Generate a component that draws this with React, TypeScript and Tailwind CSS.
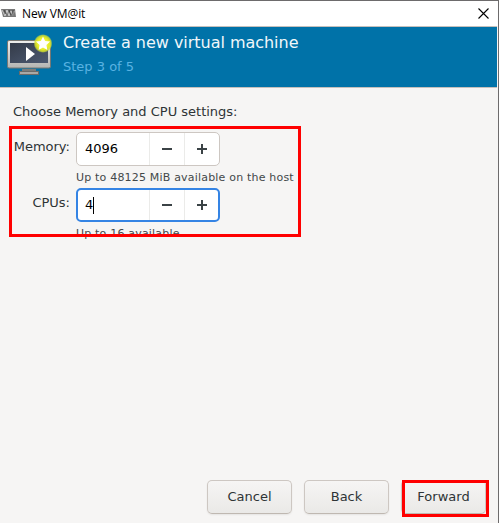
import React from "react";

function MachineIcon() {
  return (
    <svg width="47" height="46" viewBox="0 0 47 46" className="shrink-0">
      <defs>
        <linearGradient id="frame" x1="0" y1="0" x2="0" y2="1">
          <stop offset="0" stopColor="#efefed" />
          <stop offset="1" stopColor="#b4b4b2" />
        </linearGradient>
        <linearGradient id="screen" x1="0" y1="0" x2="1" y2="1">
          <stop offset="0" stopColor="#343b48" />
          <stop offset="0.5" stopColor="#414b5e" />
          <stop offset="1" stopColor="#4c5870" />
        </linearGradient>
        <radialGradient id="glow">
          <stop offset="0" stopColor="#ffff80" />
          <stop offset="0.65" stopColor="#e4eb24" />
          <stop offset="0.85" stopColor="#d8e32c" stopOpacity="0.8" />
          <stop offset="1" stopColor="#b4d050" stopOpacity="0" />
        </radialGradient>
      </defs>
      <path d="M16 35h14v3H16z" fill="#7c7c7a" />
      <rect x="13.500" y="37.500" width="19" height="3" fill="#a9a9a6" stroke="#6b6b69" />
      <rect x="1.500" y="6.500" width="43" height="27.500" rx="1.500" fill="url(#frame)" stroke="#777773" />
      <rect x="4" y="9" width="38" height="20" fill="url(#screen)" />
      <path d="M20 13v14l9-7z" fill="#fff" />
      <circle cx="37" cy="9.500" r="9.500" fill="url(#glow)" />
      <path d="M37 2.500l2.100 4.500 5 .6-3.700 3.400 1 4.900-4.400-2.500-4.400 2.500 1-4.900-3.700-3.400 5-.6z" fill="#fff" />
    </svg>
  );
}

function SpinButton({ value, focused = false }: { value: string; focused?: boolean }) {
  return (
    <div
      className={`flex h-[34px] w-36 items-stretch rounded-[5px] bg-white ${
        focused ? "border-2 border-[#3584e4]" : "border border-[#cdc7c2]"
      }`}
    >
      <div className={`flex flex-1 items-center text-black ${focused ? "pl-[7px]" : "pl-2"}`}>
        {value}
        {focused && <span className="h-[17px] w-px bg-black" />}
      </div>
      <div className="flex w-[35px] items-center justify-center border-l border-[#ebebe9]">
        <span className="h-0.5 w-2.5 bg-[#3b4346]" />
      </div>
      <div
        className={`flex items-center justify-center border-l border-[#ebebe9] ${
          focused ? "w-[34px]" : "w-[35px]"
        }`}
      >
        <svg width="10" height="10" viewBox="0 0 10 10" fill="#3b4346">
          <path d="M4 0h2v4h4v2H6v4H4V6H0V4h4z" />
        </svg>
      </div>
    </div>
  );
}

function Hint({ children }: { children: React.ReactNode }) {
  return (
    <p className="mt-[5px] h-[17px] whitespace-nowrap text-[11px] leading-[14px] tracking-[0.19px] text-[#43484a]">
      {children}
    </p>
  );
}

function DialogButton({ children }: { children: React.ReactNode }) {
  return (
    <button className="flex h-[34px] w-[85px] items-center justify-center rounded-[5px] border border-[#cdc7c2] border-b-[#bfb8b1] bg-linear-to-b from-[#f6f5f4] to-[#eae9e7] pb-px shadow-[0_1px_2px_rgba(0,0,0,0.07)]">
      {children}
    </button>
  );
}

export default function App() {
  return (
    <div className="relative flex h-[523px] w-[499px] flex-col overflow-hidden border-r border-t border-[#6d6b6c] bg-[#f6f5f4] font-['DejaVu_Sans',sans-serif] text-[13px] leading-4 text-[#2e3436]">
      <div className="flex h-[25px] shrink-0 items-center bg-white">
        <svg width="15" height="9" viewBox="0 0 15 9" className="ml-[1px]">
          <path d="M0 0h14l1 8H2z" fill="#777" />
          <path d="M1 1l3 6 2-6 2 6 2-5 2 5 1-5" fill="none" stroke="#ddd" strokeWidth="0.8" />
          <path d="M3 1l2 4M8 1l2 5M12 1v6" fill="none" stroke="#333" strokeWidth="0.8" />
        </svg>
        <span className="ml-1.5 font-['Open_Sans',sans-serif] text-[12px] tracking-[-0.1px] text-black">New VM@it</span>
        <svg width="11" height="11" viewBox="0 0 11 11" className="ml-auto mr-[9px]">
          <path d="M.5.5l10 10M10.500.5l-10 10" stroke="#000" strokeWidth="1.100" />
        </svg>
      </div>
      <header className="mr-px flex h-[62px] shrink-0 border-y border-[#c5c0bc] bg-[#0072a8] pl-1.5 pt-[7px]">
        <MachineIcon />
        <div className="-mt-px ml-2.5">
          <h1 className="text-[16px] leading-[19px] tracking-[-0.03px] text-[#f1f7fa]">Create a new virtual machine</h1>
          <p className="mt-[7px] text-[#59b2e2]">Step 3 of 5</p>
        </div>
      </header>
      <main className="flex flex-1 flex-col pl-[13px] pt-4">
        <p>Choose Memory and CPU settings:</p>
        <div className="mt-3 grid grid-cols-[57px_1fr] content-start gap-x-1.5">
          <label className="pt-[7px] text-right">Memory:</label>
          <div>
            <SpinButton value="4096" />
            <Hint>Up to 48125 MiB available on the host</Hint>
          </div>
          <label className="pt-[7px] text-right">CPUs:</label>
          <div>
            <SpinButton value="4" focused />
            <Hint>Up to 16 available</Hint>
          </div>
        </div>
      </main>
      <footer className="flex justify-end gap-3 pb-[9px] pr-[12px]">
        <DialogButton>Cancel</DialogButton>
        <DialogButton>Back</DialogButton>
        <DialogButton>Forward</DialogButton>
      </footer>
      <div className="absolute left-[9px] top-[125px] h-[111px] w-[292px] border-[3px] border-[#ff0000]" />
      <div className="absolute left-[402px] top-[479px] h-[37px] w-[87px] border-[3px] border-[#ff0000]" />
    </div>
  );
}
